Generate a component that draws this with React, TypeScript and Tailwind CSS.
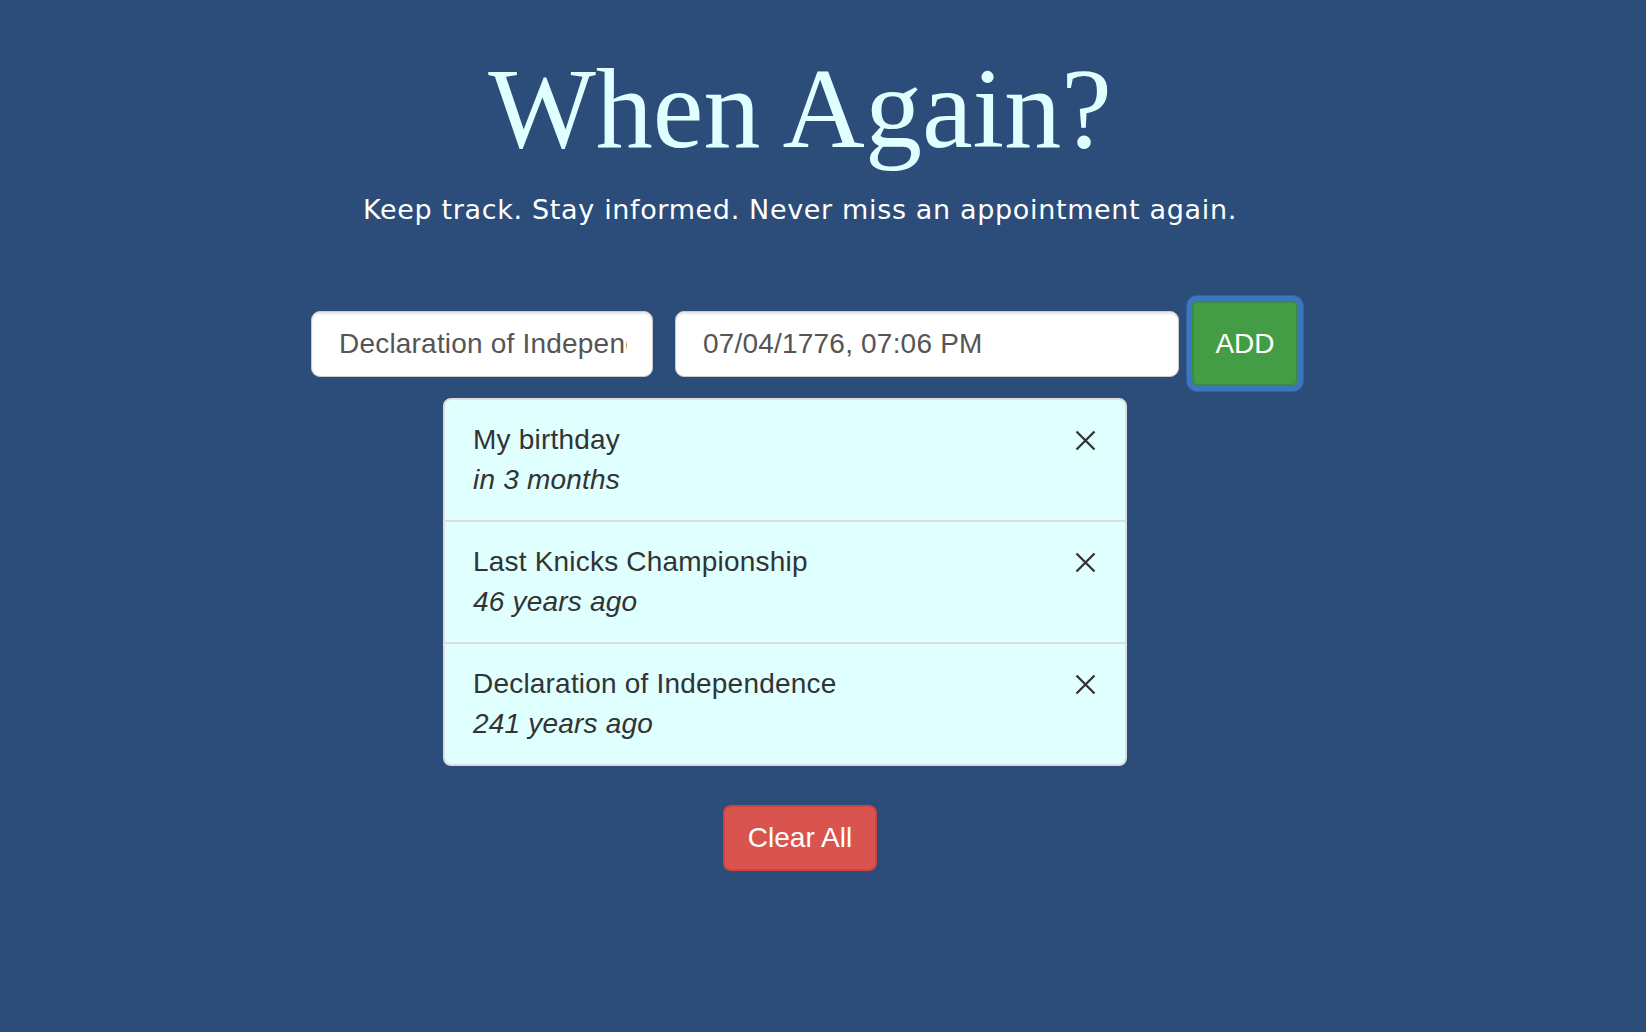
import { useState } from 'react';

type Item = { title: string; when: string };

const initialItems: Item[] = [
  { title: 'My birthday', when: 'in 3 months' },
  { title: 'Last Knicks Championship', when: '46 years ago' },
  { title: 'Declaration of Independence', when: '241 years ago' },
];

function CloseIcon() {
  return (
    <svg width="21" height="21" viewBox="0 0 21 21" fill="none">
      <path d="M1.5 1.5 L19.5 19.5 M19.5 1.5 L1.5 19.5" stroke="#333333" strokeWidth="2.3" />
    </svg>
  );
}

export default function App() {
  const [items, setItems] = useState<Item[]>(initialItems);
  const [name, setName] = useState('Declaration of Independence');
  const [date, setDate] = useState('07/04/1776, 07:06 PM');

  return (
    <div className="min-h-screen w-full bg-[#2c4d7a] font-['Liberation_Sans',Arial,sans-serif]">
      <div className="w-[1600px] flex flex-col">
        {/* Header */}
        <h1 className="pt-[52px] text-center text-[114px] leading-[114px] text-[#e0ffff] font-['Liberation_Serif','Times_New_Roman',serif] font-normal">
          When Again?
        </h1>
        <p className="mt-[29px] text-center text-[27px] leading-[30px] tracking-[0.65px] text-white font-['DejaVu_Sans',Verdana,sans-serif]">
          Keep track. Stay informed. Never miss an appointment again.
        </p>

        {/* Input row */}
        <div className="mt-[70px] pl-[311px] flex items-center">
          <input
            type="text"
            value={name}
            onChange={(e) => setName(e.target.value)}
            className="w-[342px] h-[66px] pl-[27px] pr-[25px] bg-white border border-[#cccccc] rounded-[9px] text-[28px] tracking-[0.2px] text-[#555555] shadow-[inset_0_2px_2px_rgba(0,0,0,0.1)] outline-none"
          />
          <input
            type="text"
            value={date}
            onChange={(e) => setDate(e.target.value)}
            className="ml-[22px] w-[504px] h-[66px] pl-[27px] pr-[25px] bg-white border border-[#cccccc] rounded-[9px] text-[28px] tracking-[0.2px] text-[#555555] shadow-[inset_0_2px_2px_rgba(0,0,0,0.1)] outline-none"
          />
          <div className="ml-[7px] p-[5px] rounded-[11px] bg-[#3a77c0] border border-[#2f63a3]">
            <button
              onClick={() => {
                if (name.trim() !== '') setItems((prev) => [...prev, { title: name, when: 'just now' }]);
              }}
              className="w-[106px] h-[85px] flex items-center justify-center bg-[#449d44] border-2 border-[#3d8c3d] rounded-[6px] text-[28px] text-white"
            >
              ADD
            </button>
          </div>
        </div>

        {/* List */}
        <div className="mt-[6px] ml-[443px] w-[684px] bg-[#e0ffff] border-2 border-[#dddddd] rounded-[8px] overflow-hidden">
          {items.map((item, index) => (
            <div
              key={index}
              className={`flex justify-between pl-[28px] pr-[29px] pt-[20px] pb-[20px] text-[28px] leading-[40px] tracking-[0.2px] text-[#333333] ${index > 0 ? 'border-t-2 border-[#dddddd]' : ''}`}
            >
              <div>
                <div>{item.title}</div>
                <div className="italic">{item.when}</div>
              </div>
              <button
                onClick={() => setItems((prev) => prev.filter((_, i) => i !== index))}
                className="h-[40px] flex items-center"
              >
                <CloseIcon />
              </button>
            </div>
          ))}
        </div>

        {/* Clear all */}
        <div className="mt-[39px] flex justify-center">
          <button
            onClick={() => setItems([])}
            className="w-[154px] h-[66px] bg-[#d9534f] border-2 border-[#d0433e] rounded-[8px] text-[28px] text-white"
          >
            Clear All
          </button>
        </div>
      </div>
    </div>
  );
}
